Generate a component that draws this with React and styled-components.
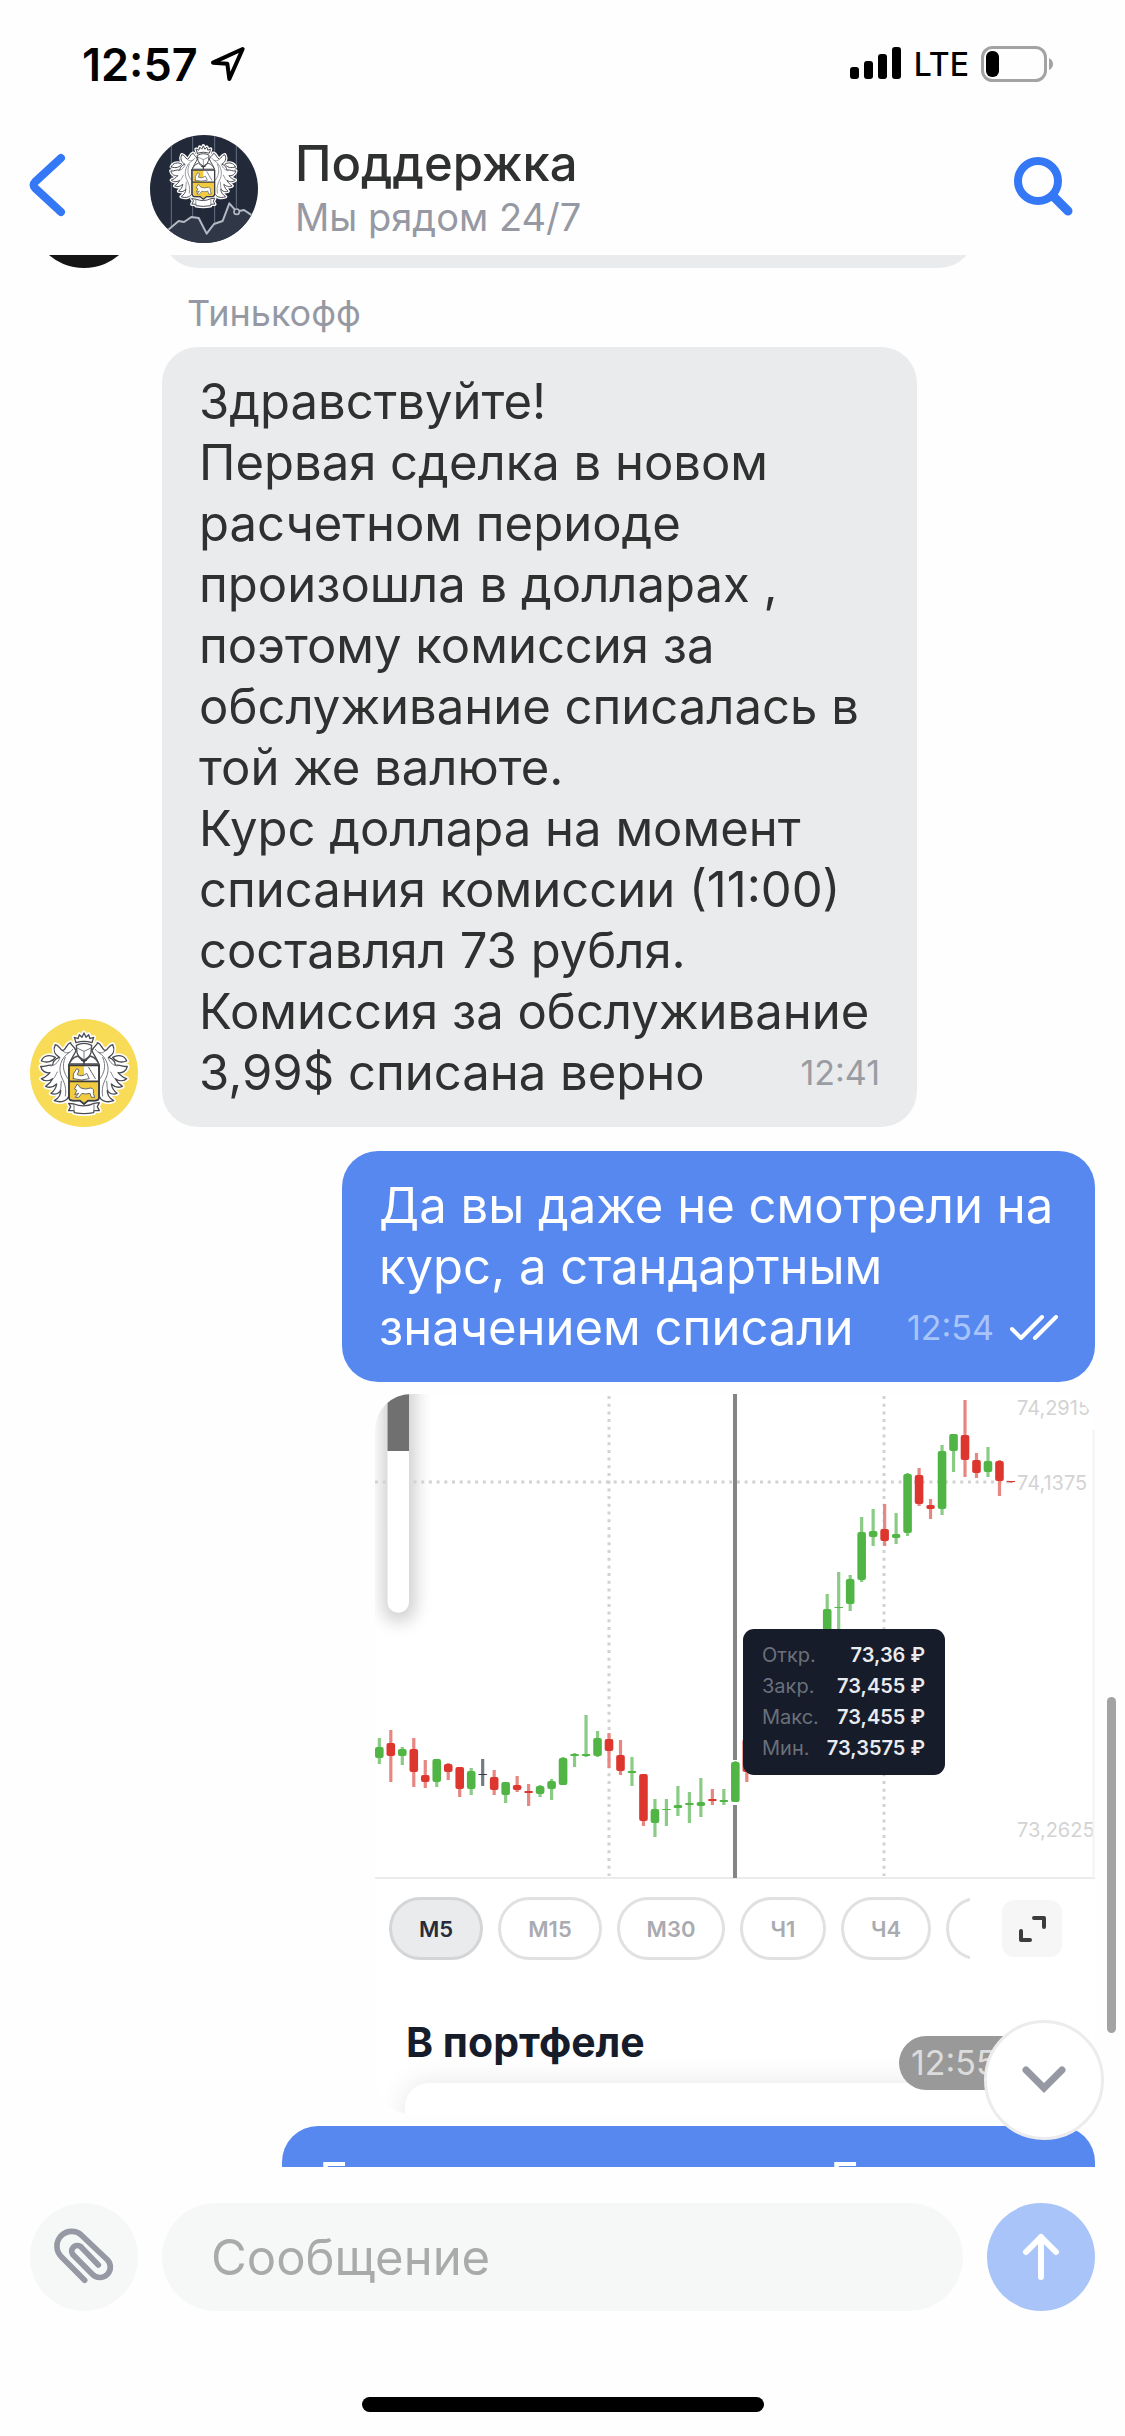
import React from "react";
import styled, { createGlobalStyle } from "styled-components";

const GlobalStyle = createGlobalStyle`
  * {
    box-sizing: border-box;
  }

  body {
    margin: 0;
    background: #fefefe;
    font-family: Inter, "Liberation Sans", sans-serif;
    color: #2f3030;
  }

  button {
    padding: 0;
    border: 0;
    background: none;
    font: inherit;
    cursor: pointer;
  }

  svg {
    display: block;
    flex: none;
  }
`;

const Screen = styled.div`
  display: flex;
  flex-direction: column;
  height: 100vh;
  overflow: hidden;
`;

/* status bar */

const StatusBar = styled.div`
  display: flex;
  align-items: flex-start;
  justify-content: space-between;
  height: 123px;
  padding: 40px 72px 0 82px;
  color: #000;
`;

const StatusGroup = styled.div`
  display: flex;
  align-items: center;
  gap: 12px;
  height: 48px;
`;

const Clock = styled.span`
  font-size: 45px;
  font-weight: 600;
`;

const Network = styled.span`
  font-size: 32px;
  font-weight: 500;
`;

/* header */

const Header = styled.header`
  display: flex;
  align-items: center;
  padding: 12px 49px 12px 28px;
`;

const BackButton = styled.button`
  width: 122px;
  height: 72px;
  padding-bottom: 8px;
`;

const SearchButton = styled.button`
  padding-bottom: 4px;
`;

const Round = styled.div`
  flex: none;
  width: 108px;
  height: 108px;
  border-radius: 50%;
  overflow: hidden;
  background: ${({ $color }) => $color};
`;

const Heading = styled.div`
  flex: 1;
  padding: 0 0 2px 37px;
`;

const Title = styled.h1`
  margin: 0;
  font-size: 49px;
  font-weight: 500;
  line-height: 58px;
`;

const Subtitle = styled.p`
  margin: 0;
  font-size: 38px;
  line-height: 48px;
  color: #9699a3;
`;

/* chat */

const Chat = styled.main`
  position: relative;
  flex: 1;
  min-height: 0;
  overflow: hidden;
  display: flex;
  flex-direction: column;
  padding: 0 30px;
`;

const Row = styled.div`
  flex: none;
  display: flex;
  align-items: flex-end;
  justify-content: ${({ $own }) => ($own ? "flex-end" : "flex-start")};
  gap: 24px;
  margin-bottom: ${({ $gap }) => $gap || 0}px;
`;

const ClippedRow = styled(Row)`
  height: 13px;
`;

const Sender = styled.div`
  flex: none;
  padding: 21px 0 10px 157px;
  font-size: 36px;
  line-height: 48px;
  color: #9699a3;
`;

const Bubble = styled.div`
  width: 100%;
  max-width: ${({ $width }) => $width}px;
  min-height: 109px;
  padding: 24px 37px;
  border-radius: 36px;
  background: ${({ $own }) => ($own ? "#5688f0" : "#eaebec")};
  color: ${({ $own }) => ($own ? "#fff" : "#2f3030")};
  font-size: 49px;
  line-height: 61px;
  white-space: pre-line;
`;

const LastLine = styled.div`
  display: flex;
  justify-content: space-between;
`;

const Time = styled.time`
  display: flex;
  align-items: center;
  gap: 16px;
  font-size: 34px;
  color: ${({ $own }) => ($own ? "#a9c4f8" : "#999ca3")};
`;

const Cut = styled.span`
  display: inline-block;
  width: 511px;
`;

/* picture message */

const Picture = styled.figure`
  position: relative;
  width: 100%;
  max-width: 720px;
  height: 720px;
  margin: 0;
  border-radius: 36px;
  overflow: hidden;
  background: #fff;
`;

const Plot = styled.div`
  position: relative;
  height: 485px;
  border-bottom: 2px solid #ebebeb;
`;

const Tooltip = styled.dl`
  position: absolute;
  left: 368px;
  top: 235px;
  width: 202px;
  margin: 0;
  padding: 11px 20px 11px 19px;
  border-radius: 11px;
  background: #161c2a;
  font-size: 20px;
  line-height: 31px;
`;

const TooltipLine = styled.div`
  display: flex;
  justify-content: space-between;

  dt {
    color: #6b707b;
  }

  dd {
    margin: 0;
    font-weight: 600;
    color: #e9ebef;
  }
`;

const Intervals = styled.div`
  display: flex;
  align-items: center;
  padding: 18px 33px 0 14px;
`;

const IntervalList = styled.div`
  flex: 1;
  display: flex;
  gap: 15px;
  margin-right: 32px;
  overflow: hidden;
`;

const Interval = styled.button`
  flex: none;
  width: ${({ $width }) => $width}px;
  height: 63px;
  border: 3px solid ${({ $active }) => ($active ? "#d3d5d7" : "#e0e1e2")};
  border-radius: 32px;
  background: ${({ $active }) => ($active ? "#eaebec" : "#fff")};
  font-size: 22px;
  font-weight: 600;
  color: ${({ $active }) => ($active ? "#262c3a" : "#a9abb0")};
`;

const Expand = styled.button`
  display: flex;
  align-items: center;
  justify-content: center;
  width: 60px;
  height: 57px;
  border-radius: 12px;
  background: #f6f6f6;
`;

const Portfolio = styled.h2`
  margin: 0;
  padding: 58px 31px 0;
  font-size: 41px;
  font-weight: 700;
  line-height: 48px;
  color: #161c2a;
`;

const PortfolioCard = styled.div`
  height: 80px;
  margin: 17px -60px 0 30px;
  border-radius: 24px;
  background: #fff;
  box-shadow: 0 0 30px rgba(0, 0, 0, 0.1);
`;

const PictureTime = styled.time`
  position: absolute;
  right: 16px;
  bottom: 24px;
  width: 180px;
  padding-left: 12px;
  border-radius: 27px;
  background: #999;
  font-size: 34px;
  line-height: 54px;
  color: #dcdcdc;
`;

const ScrollThumb = styled.div`
  position: absolute;
  right: 9px;
  top: 1442px;
  width: 9px;
  height: 336px;
  border-radius: 5px;
  background: #a3a3a3;
`;

const ScrollDown = styled.button`
  position: absolute;
  right: 21px;
  bottom: 27px;
  display: flex;
  align-items: center;
  justify-content: center;
  width: 120px;
  height: 120px;
  border: 3px solid #ececee;
  border-radius: 50%;
  background: #fff;
`;

/* composer */

const Composer = styled.form`
  display: flex;
  gap: 24px;
  padding: 36px 30px 86px;
`;

const RoundButton = styled.button`
  flex: none;
  display: flex;
  align-items: center;
  justify-content: center;
  width: 108px;
  height: 108px;
  border-radius: 50%;
  background: ${({ $primary }) => ($primary ? "#a9c4f8" : "#f6f8f8")};
`;

const Field = styled.input`
  flex: 1;
  min-width: 0;
  height: 108px;
  padding: 0 49px;
  border: 0;
  border-radius: 54px;
  outline: 0;
  background: #f6f8f8;
  font: inherit;
  font-size: 49px;

  &::placeholder {
    color: #a9abab;
    opacity: 1;
  }
`;

const HomeIndicator = styled.div`
  flex: none;
  width: 402px;
  height: 15px;
  margin: 0 auto 24px;
  border-radius: 8px;
  background: #000;
`;

/* drawings */

const LEAF =
  "M168 122 C162 106 150 104 152 98 C138 102 140 118 128 122 C119 118 118 106 106 104 C98 120 104 134 118 142 C106 146 98 156 98 166 C84 162 74 172 62 169 C65 184 78 190 90 188 C82 197 72 204 64 206 C76 216 90 212 98 206 C93 217 84 224 77 229 C90 235 102 230 110 222 C108 235 101 244 93 250 C106 255 117 250 122 241 C123 254 113 266 103 272 C124 280 142 272 147 258 L147 166 C150 150 161 138 168 122Z";

const LEAF_LINES = [
  "M150 126 C122 142 112 176 126 204 C134 220 140 236 136 258",
  "M130 124 C138 132 150 130 158 118",
  "M120 144 C112 160 104 166 92 168",
  "M112 186 C104 200 106 200 100 206",
  "M136 142 C124 168 132 190 144 206",
  "M124 214 C122 226 124 232 121 240",
];

const SMALL_LEAF = "M64 153 C70 136 90 133 106 142 C98 154 82 160 64 153Z";

const CREST_BODY = [
  "M168 98 L163 82 L174 86 L178 74 L186 82 L192 69 L198 82 L206 74 L210 86 L221 82 L216 98 Q192 90 168 98Z",
  "M169 106 Q192 94 215 106 L213 128 Q209 142 192 150 Q175 142 171 128Z",
  "M147 168 Q149 146 173 138 L192 156 L211 138 Q235 146 237 168Z",
  "M147 162 H237 V262 Q237 272 224 272 H204 L192 282 L180 272 H160 Q147 272 147 262Z",
  "M146 280 L162 282 Q192 294 222 280 L238 278 L232 290 L238 302 L222 302 L221 308 Q192 314 163 308 L162 302 L146 302 L152 290Z",
];

const Leaves = () => (
  <>
    <path d={LEAF} />
    <path d={SMALL_LEAF} />
  </>
);

const CrestShapes = () => (
  <>
    <Leaves />
    <g transform="translate(384 0) scale(-1 1)">
      <Leaves />
    </g>
    {CREST_BODY.map((d) => (
      <path d={d} key={d} />
    ))}
  </>
);

const LeafLines = () => LEAF_LINES.map((d) => <path d={d} key={d} />);

const Crest = () => (
  <g strokeLinejoin="round" strokeLinecap="round">
    <g fill="#fff" stroke="#fff" strokeWidth="14">
      <CrestShapes />
    </g>
    <g fill="#fff" stroke="#4a4c52" strokeWidth="4">
      <CrestShapes />
    </g>
    <g fill="none" stroke="#777a80" strokeWidth="3">
      <LeafLines />
      <g transform="translate(384 0) scale(-1 1)">
        <LeafLines />
      </g>
      <path d="M171 114 L192 124 L213 114 M192 124 V148 M162 284 V302 M222 284 V302" />
    </g>
    <path
      d="M150 165 H192 V213 H150Z M150 213 H234 V260 Q234 269 222 269 H203 L192 278 L181 269 H162 Q150 269 150 260Z"
      fill="#f3cb3e"
    />
    <path d="M185 151 H199 M192 151 V163" stroke="#3a3c42" strokeWidth="4" />
    <path
      d="M147 166 H237 V262 Q237 272 224 272 H204 L192 282 L180 272 H160 Q147 272 147 262Z M147 214 H237"
      fill="none"
      stroke="#3a3c42"
      strokeWidth="5"
    />
    <path
      d="M160 206 L160 192 L170 176 L177 180 L172 194 Q186 202 200 190 L208 206 Q186 214 160 206Z"
      fill="#fff"
      stroke="#66686e"
      strokeWidth="3"
    />
    <path d="M206 172 L226 206" stroke="#66686e" strokeWidth="3" />
    <path
      d="M164 236 L172 222 L182 234 Q196 240 212 234 Q224 236 220 250 L224 262 L214 262 L210 250 Q196 254 186 250 L176 262 L166 262 L176 250 L164 254 L170 242Z"
      fill="#fff"
      stroke="#66686e"
      strokeWidth="3"
    />
  </g>
);

const HeaderAvatar = () => (
  <Round $color="#222a39">
    <svg width="108" height="108" viewBox="30 45 324 324" aria-hidden="true">
      <path
        d="M84 330 L116 303 L132 306 L154 291 L176 294 L200 341 L222 312 L248 303 L268 250 L284 268 L292 274 L312 270 L354 292 V369 H84Z"
        fill="#303848"
      />
      <path d="M94 45 V320 M158 45 V292 M224 45 V310 M289 45 V264" stroke="#667083" strokeWidth="3" />
      <path
        d="M84 330 L116 303 L132 306 L154 291 L176 294 L200 341 L222 312 L248 303 L268 250 L284 268 M298 273 L312 270 L336 286"
        fill="none"
        stroke="#b4bac4"
        strokeWidth="6"
        strokeLinejoin="round"
      />
      <circle cx="290" cy="275" r="8" fill="none" stroke="#b4bac4" strokeWidth="5" />
      <g transform="translate(46 26) scale(0.75)">
        <Crest />
      </g>
    </svg>
  </Round>
);

const BankAvatar = () => (
  <Round $color="#f8db56">
    <svg width="108" height="108" viewBox="30 27 324 324" aria-hidden="true">
      <Crest />
    </svg>
  </Round>
);

// index, colour, wick top, body top, body bottom, wick bottom
const CANDLES = [
  [0, "g", 344, 353, 364, 370],
  [1, "r", 336, 349, 362, 388],
  [2, "g", 353, 355, 362, 371],
  [3, "r", 344, 355, 378, 393],
  [4, "r", 366, 381, 388, 394],
  [5, "g", 365, 365, 388, 393],
  [6, "r", 369, 370, 378, 386],
  [7, "r", 373, 373, 395, 403],
  [8, "g", 374, 377, 395, 401],
  [9, "k", 365, 380, 381, 392],
  [10, "r", 376, 383, 396, 401],
  [11, "g", 388, 388, 401, 409],
  [12, "r", 382, 391, 396, 398],
  [13, "r", 390, 397, 399, 412],
  [14, "g", 391, 392, 400, 403],
  [15, "g", 385, 387, 395, 406],
  [16, "g", 363, 364, 391, 391],
  [17, "g", 359, 360, 362, 373],
  [18, "g", 321, 360, 362, 363],
  [19, "g", 337, 344, 362, 363],
  [20, "r", 339, 345, 357, 374],
  [21, "r", 346, 361, 377, 381],
  [22, "g", 363, 377, 379, 392],
  [23, "r", 380, 380, 427, 432],
  [24, "g", 405, 415, 429, 443],
  [25, "g", 405, 415, 416, 432],
  [26, "g", 392, 411, 414, 422],
  [27, "g", 398, 409, 411, 429],
  [28, "g", 384, 408, 412, 423],
  [29, "r", 395, 405, 407, 411],
  [30, "g", 395, 406, 408, 411],
  [31, "g", 367, 368, 408, 408],
  [32, "r", 340, 345, 378, 388],
  [39, "g", 200, 215, 260, 260],
  [40, "g", 178, 213, 214, 250],
  [41, "g", 181, 185, 210, 217],
  [42, "g", 123, 138, 186, 188],
  [43, "g", 115, 137, 143, 152],
  [44, "r", 110, 135, 147, 152],
  [45, "g", 119, 140, 144, 150],
  [46, "g", 79, 80, 139, 142],
  [47, "r", 74, 81, 110, 112],
  [48, "r", 105, 111, 115, 125],
  [49, "g", 51, 57, 115, 121],
  [50, "g", 40, 40, 57, 78],
  [51, "r", 6, 41, 66, 83],
  [52, "r", 59, 66, 79, 84],
  [53, "g", 53, 67, 78, 83],
  [54, "r", 66, 67, 87, 102],
  [55, "r", 87, 87, 88, 89],
];

const BODY_COLORS = { g: "#50b544", r: "#dd362e", k: "#333846" };
const WICK_COLORS = { g: "#8acb85", r: "#e88782", k: "#767a84" };

const Chart = () => (
  <svg width="720" height="484" viewBox="0 0 720 484" role="img" aria-label="График курса">
    <defs>
      <filter id="soft" x="-200%" y="-20%" width="500%" height="140%">
        <feGaussianBlur stdDeviation="9" />
      </filter>
    </defs>
    <rect x="8" y="-30" width="32" height="258" rx="16" fill="#000" opacity="0.2" filter="url(#soft)" />
    <g stroke="#d2d2d2" strokeWidth="3" strokeDasharray="3 4.7">
      <path d="M0 88 H636" />
      <path d="M234 2 V482" />
      <path d="M509 2 V482" />
    </g>
    <path d="M12.500 0 H34 V208 A10.750 10.750 0 0 1 12.500 208Z" fill="#fff" />
    <rect x="12.500" y="0" width="21.500" height="57" fill="#707070" />
    <path d="M360 0 V366 M360 411 V484" stroke="#858585" strokeWidth="4" />
    {CANDLES.map(([index, color, high, top, bottom, low]) => {
      const x = 4.33 + index * 11.484;
      return (
        <g key={index}>
          <rect x={x - 1.6} y={high} width="3.200" height={low - high} fill={WICK_COLORS[color]} />
          <rect
            x={x - 4.3}
            y={top}
            width="8.600"
            height={bottom - top}
            rx={Math.min(2, (bottom - top) / 2)}
            fill={BODY_COLORS[color]}
          />
        </g>
      );
    })}
    <g fill="#d3d3d3" fontSize="20" fontFamily="Inter, sans-serif">
      <text x="642" y="21">
        74,2915
      </text>
      <text x="642" y="96">
        74,1375
      </text>
      <text x="642" y="443">
        73,2625
      </text>
    </g>
    <path d="M718.500 36 V484" stroke="#f3f3f3" strokeWidth="2" />
  </svg>
);

const PRICES = [
  ["Откр.", "73,36 ₽"],
  ["Закр.", "73,455 ₽"],
  ["Макс.", "73,455 ₽"],
  ["Мин.", "73,3575 ₽"],
];

const INTERVALS = [
  { label: "М5", width: 94, active: true },
  { label: "М15", width: 104 },
  { label: "М30", width: 108 },
  { label: "Ч1", width: 86 },
  { label: "Ч4", width: 90 },
  { label: "", width: 90 },
];

const ANSWER = `Здравствуйте!
Первая сделка в новом
расчетном периоде
произошла в долларах ,
поэтому комиссия за
обслуживание списалась в
той же валюте.
Курс доллара на момент
списания комиссии (11:00)
составлял 73 рубля.
Комиссия за обслуживание`;

const REPLY = `Да вы даже не смотрели на
курс, а стандартным`;

const App = () => (
  <>
    <GlobalStyle />
    <Screen>
      <StatusBar>
        <StatusGroup>
          <Clock>12:57</Clock>
          <svg width="36" height="36" viewBox="55 50 108 108" aria-hidden="true">
            <path
              d="M153 59 L64 100 L107 103 L113 149Z"
              fill="none"
              stroke="#000"
              strokeWidth="12"
              strokeLinejoin="round"
            />
          </svg>
        </StatusGroup>
        <StatusGroup>
          <svg width="52" height="34" viewBox="0 0 52 34" aria-hidden="true">
            <rect x="0" y="20" width="9" height="12" rx="3" />
            <rect x="14" y="14" width="9" height="18" rx="3" />
            <rect x="28" y="7" width="9" height="25" rx="3" />
            <rect x="42" y="0" width="9" height="32" rx="3" />
          </svg>
          <Network>LTE</Network>
          <svg width="72" height="36" viewBox="0 0 72 36" aria-hidden="true">
            <rect x="1.500" y="1.500" width="63" height="33" rx="10" fill="none" stroke="#a3a3a3" strokeWidth="3" />
            <rect x="5" y="5" width="13" height="26" rx="6" />
            <path d="M68 12 Q72 14 72 18 Q72 22 68 24Z" fill="#a3a3a3" />
          </svg>
        </StatusGroup>
      </StatusBar>

      <Header>
        <BackButton type="button" aria-label="Назад">
          <svg width="40" height="64" viewBox="0 0 40 64">
            <path
              d="M33 5 L7 29 Q4 32 7 35 L33 59"
              fill="none"
              stroke="#3478f6"
              strokeWidth="8"
              strokeLinecap="round"
            />
          </svg>
        </BackButton>
        <HeaderAvatar />
        <Heading>
          <Title>Поддержка</Title>
          <Subtitle>Мы рядом 24/7</Subtitle>
        </Heading>
        <SearchButton type="button" aria-label="Поиск">
          <svg width="64" height="62" viewBox="0 0 64 62">
            <circle cx="26" cy="25" r="20" fill="none" stroke="#3478f6" strokeWidth="8" />
            <path d="M41 40 L56 55" stroke="#3478f6" strokeWidth="9" strokeLinecap="round" />
          </svg>
        </SearchButton>
      </Header>

      <Chat>
        <ClippedRow>
          <Round $color="#151515" />
          <Bubble $width={813} />
        </ClippedRow>
        <Sender>Тинькофф</Sender>
        <Row $gap={24}>
          <BankAvatar />
          <Bubble $width={755}>
            {ANSWER}
            <LastLine>
              <span>3,99$ списана верно</span>
              <Time>12:41</Time>
            </LastLine>
          </Bubble>
        </Row>
        <Row $own $gap={12}>
          <Bubble $own $width={753}>
            {REPLY}
            <LastLine>
              <span>значением списали</span>
              <Time $own>
                12:54
                <svg width="48" height="26" viewBox="0 0 48 26" aria-label="Прочитано">
                  <path
                    d="M2 14 L11 23 L32 2 M25 23 L46 2"
                    fill="none"
                    stroke="#fff"
                    strokeWidth="4"
                    strokeLinecap="round"
                    strokeLinejoin="round"
                  />
                </svg>
              </Time>
            </LastLine>
          </Bubble>
        </Row>
        <Row $own $gap={12}>
          <Picture>
            <Plot>
              <Chart />
              <Tooltip>
                {PRICES.map(([name, value]) => (
                  <TooltipLine key={name}>
                    <dt>{name}</dt>
                    <dd>{value}</dd>
                  </TooltipLine>
                ))}
              </Tooltip>
            </Plot>
            <Intervals>
              <IntervalList>
                {INTERVALS.map(({ label, width, active }) => (
                  <Interval
                    key={label}
                    type="button"
                    aria-label={label || "Д"}
                    $width={width}
                    $active={active}
                  >
                    {label}
                  </Interval>
                ))}
              </IntervalList>
              <Expand type="button" aria-label="Развернуть">
                <svg width="28" height="28" viewBox="0 0 28 28">
                  <path
                    d="M16 3 H26 V12 M3 16 V25 H12"
                    fill="none"
                    stroke="#3c3c3c"
                    strokeWidth="4"
                    strokeLinecap="round"
                    strokeLinejoin="round"
                  />
                </svg>
              </Expand>
            </Intervals>
            <Portfolio>В портфеле</Portfolio>
            <PortfolioCard />
            <PictureTime>12:55</PictureTime>
          </Picture>
        </Row>
        <Row $own>
          <Bubble $own $width={813}>
            <Cut>Е</Cut>Е
          </Bubble>
        </Row>
        <ScrollThumb />
        <ScrollDown type="button" aria-label="Вниз">
          <svg width="44" height="28" viewBox="0 0 44 28">
            <path
              d="M4 4 L22 22 L40 4"
              fill="none"
              stroke="#9699a3"
              strokeWidth="7"
              strokeLinecap="round"
            />
          </svg>
        </ScrollDown>
      </Chat>

      <Composer>
        <RoundButton type="button" aria-label="Прикрепить файл">
          <svg width="108" height="108" viewBox="30 30 324 324">
            <path
              d="M194 262 L124 191 A44 44 0 0 1 186 128 L262 200 A31 31 0 0 1 217 244 L158 184 A17 17 0 0 1 181 160 L235 216"
              fill="none"
              stroke="#9699a3"
              strokeWidth="17"
              strokeLinecap="round"
            />
          </svg>
        </RoundButton>
        <Field type="text" aria-label="Сообщение" placeholder="Сообщение" />
        <RoundButton type="submit" aria-label="Отправить" $primary>
          <svg width="38" height="48" viewBox="0 0 38 48">
            <path
              d="M19 44 V4 M4 19 L19 4 L34 19"
              fill="none"
              stroke="#fff"
              strokeWidth="6"
              strokeLinecap="round"
              strokeLinejoin="round"
            />
          </svg>
        </RoundButton>
      </Composer>
      <HomeIndicator />
    </Screen>
  </>
);

export default App;
